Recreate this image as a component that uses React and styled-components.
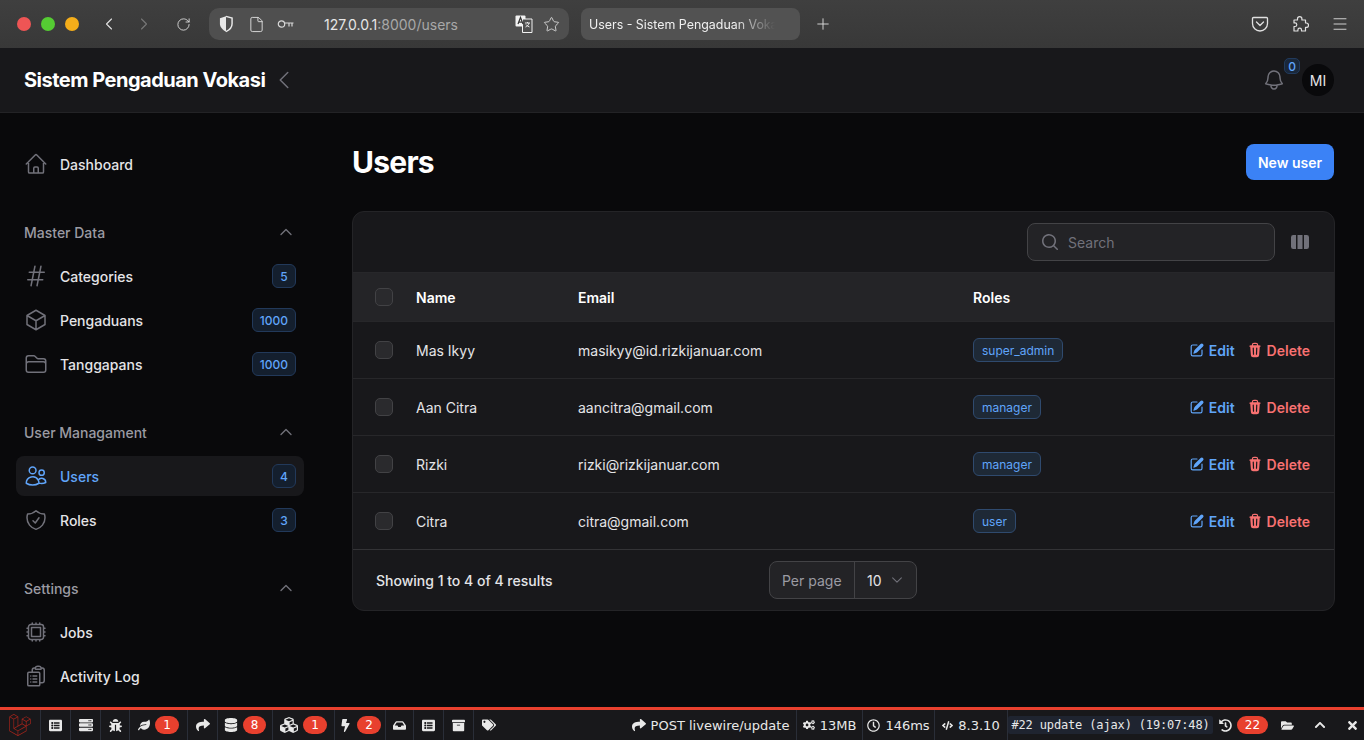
import React from 'react';
import styled, { createGlobalStyle } from 'styled-components';
import { ChevronLeft, ChevronRight, RotateCw, File, Star, Plus, Menu } from 'lucide-react';
import {
  FaLaravel, FaListAlt, FaServer, FaBug, FaLeaf, FaShare, FaDatabase, FaCubes, FaBolt, FaInbox,
  FaArchive, FaTags, FaCogs, FaRegClock, FaCode, FaHistory, FaFolderOpen, FaChevronUp, FaTimes,
} from 'react-icons/fa';

const GlobalStyle = createGlobalStyle`
  html, body {
    margin: 0;
    padding: 0;
    height: 100%;
    overflow: hidden;
    background: #09090b;
  }
  * { box-sizing: border-box; }
  body {
    font-family: Inter, "Liberation Sans", sans-serif;
    font-size: 14px;
    color: #e4e4e7;
  }
`;

const Page = styled.div`
  display: flex;
  flex-direction: column;
  height: 740px;
`;

/* browser chrome */
const Chrome = styled.div`
  height: 48px;
  flex: none;
  display: flex;
  align-items: center;
  background: linear-gradient(#3f3f3f, #383838);
  color: #e0e0e0;
`;

const Lights = styled.div`
  display: flex;
  gap: 10px;
  padding-left: 17px;
  width: 91px;
`;

const Light = styled.span`
  width: 14px;
  height: 14px;
  border-radius: 50%;
  background: ${(p) => p.$color};
`;

const NavIcon = styled.span`
  width: ${(p) => p.$w || 35}px;
  display: flex;
  justify-content: center;
  color: ${(p) => (p.$dim ? '#777' : '#e0e0e0')};
`;

const UrlBar = styled.div`
  margin-left: 3px;
  width: 360px;
  height: 32px;
  border-radius: 10px;
  background: #4f4f4f;
  display: flex;
  align-items: center;
  padding-left: 8px;
`;

const UrlText = styled.div`
  margin-left: 29px;
  flex: 1;
  font-size: 14px;
  color: #e6e6e6;
  span { color: #a8a8a8; }
`;

const Tab = styled.div`
  margin-left: 12px;
  width: 219px;
  height: 32px;
  border-radius: 8px;
  background: #525252;
  display: flex;
  align-items: center;
  padding-left: 8px;
  font-size: 12.4px;
  color: #f0f0f0;
  span {
    width: 186px;
    overflow: hidden;
    white-space: nowrap;
    -webkit-mask-image: linear-gradient(90deg, #000 78%, transparent);
    mask-image: linear-gradient(90deg, #000 78%, transparent);
  }
`;

const ChromeRight = styled.div`
  margin-left: auto;
  display: flex;
  align-items: center;
  padding-right: 4px;
`;

/* app top bar */
const TopBar = styled.header`
  height: 65px;
  flex: none;
  display: flex;
  align-items: center;
  padding: 0 30px 0 24px;
  background: #18181b;
  border-bottom: 1px solid #232326;
`;

const Brand = styled.div`
  font-size: 20px;
  font-weight: 700;
  letter-spacing: -0.5px;
  color: #fff;
  line-height: 28px;
`;

const Collapse = styled.span`
  display: flex;
  margin-left: 7px;
  color: #71717a;
`;

const TopRight = styled.div`
  margin-left: auto;
  display: flex;
  align-items: center;
  gap: 16px;
`;

const Bell = styled.div`
  position: relative;
  display: flex;
  color: #71717a;
`;

const BellCount = styled.span`
  position: absolute;
  top: -10px;
  left: 22px;
  width: 16px;
  height: 16px;
  border-radius: 5px;
  display: flex;
  align-items: center;
  justify-content: center;
  font-size: 12px;
  font-weight: 500;
  color: #60a5fa;
  background: #19273a;
  border: 1px solid #213a5c;
`;

const Avatar = styled.div`
  width: 32px;
  height: 32px;
  border-radius: 50%;
  background: #09090b;
  display: flex;
  align-items: center;
  justify-content: center;
  font-size: 14px;
  color: #e4e4e7;
`;

/* body */
const Body = styled.div`
  flex: 1;
  min-height: 0;
  display: flex;
`;

const Sidebar = styled.nav`
  width: 320px;
  flex: none;
  padding: 31px 16px 0;
  display: flex;
  flex-direction: column;
  gap: 28px;
`;

const Group = styled.div`
  display: flex;
  flex-direction: column;
  gap: 4px;
`;

const GroupLabel = styled.div`
  height: 40px;
  display: flex;
  align-items: center;
  justify-content: space-between;
  padding: 0 10px 0 8px;
  font-weight: 500;
  color: #9b9ba3;
  svg { color: #71717a; }
`;

const Item = styled.a`
  height: 40px;
  border-radius: 8px;
  display: flex;
  align-items: center;
  gap: 12px;
  padding: 0 8px;
  font-weight: 500;
  color: ${(p) => (p.$active ? '#60a5fa' : '#e4e4e7')};
  background: ${(p) => (p.$active ? '#18181b' : 'transparent')};
  svg { color: ${(p) => (p.$active ? '#60a5fa' : '#71717a')}; flex: none; }
  b {
    font-weight: 500;
    flex: 1;
  }
`;

const Pill = styled.span`
  min-width: 24px;
  height: 24px;
  padding: 0 7px;
  border-radius: 6px;
  display: inline-flex;
  align-items: center;
  justify-content: center;
  font-size: 12px;
  font-weight: 500;
  color: #60a5fa;
  background: #141f2e;
  border: 1px solid #22395a;
`;

const Main = styled.main`
  flex: 1;
  min-width: 0;
  padding: 31px 29px 0 32px;
`;

const Heading = styled.div`
  height: 36px;
  display: flex;
  align-items: center;
  justify-content: space-between;
  margin-bottom: 31px;
  h1 {
    margin: 0;
    font-size: 30px;
    font-weight: 700;
    letter-spacing: -0.75px;
    color: #fff;
  }
`;

const NewButton = styled.button`
  height: 36px;
  width: 88px;
  margin-right: 1px;
  border: 0;
  border-radius: 8px;
  background: #3b82f6;
  color: #fff;
  font-family: inherit;
  font-size: 14px;
  font-weight: 600;
`;

const Card = styled.section`
  height: 400px;
  border-radius: 12px;
  background: #18181b;
  border: 1px solid #242427;
  overflow: hidden;
`;

const Toolbar = styled.div`
  height: 60px;
  display: flex;
  align-items: center;
  justify-content: flex-end;
  gap: 15px;
  padding-right: 24px;
`;

const Search = styled.div`
  width: 248px;
  height: 38px;
  border-radius: 8px;
  background: #232326;
  border: 1px solid #434346;
  display: flex;
  align-items: center;
  gap: 8px;
  padding-left: 12px;
  color: #71717a;
  font-size: 14px;
`;

const ColumnsIcon = styled.span`
  display: flex;
  color: #71717a;
`;

const Row = styled.div`
  display: grid;
  grid-template-columns: 41px 162px 395px 1fr auto;
  align-items: center;
  height: ${(p) => (p.$head ? 49 : 57)}px;
  padding: 0 24px 0 22px;
  border-top: 1px solid #27272a;
  background: ${(p) => (p.$head ? '#242427' : 'transparent')};
  font-weight: ${(p) => (p.$head ? 600 : 400)};
  color: ${(p) => (p.$head ? '#fff' : '#e4e4e7')};
`;

const Check = styled.span`
  width: 18px;
  height: 18px;
  border-radius: 5px;
  background: #2a2a2d;
  border: 1px solid #424245;
`;

const Role = styled.span`
  display: inline-flex;
  align-items: center;
  height: 24px;
  padding: 0 8px;
  border-radius: 6px;
  font-size: 12px;
  font-weight: 400;
  color: #60a5fa;
  background: #1e2936;
  border: 1px solid #2f4a6e;
`;

const Actions = styled.div`
  display: flex;
  gap: 12px;
`;

const Action = styled.a`
  display: flex;
  align-items: center;
  gap: 4px;
  font-weight: 600;
  color: ${(p) => (p.$danger ? '#f87171' : '#60a5fa')};
`;

const Footer = styled.div`
  height: 61px;
  border-top: 1px solid #333336;
  display: grid;
  grid-template-columns: 1fr auto 1fr;
  align-items: center;
  padding: 0 24px 0 23px;
  font-weight: 500;
  color: #e4e4e7;
`;

const PerPage = styled.div`
  height: 38px;
  display: flex;
  align-items: center;
  border-radius: 8px;
  border: 1px solid #434346;
  background: #232326;
`;

const PerLabel = styled.span`
  width: 85px;
  height: 100%;
  display: flex;
  align-items: center;
  padding-left: 12px;
  color: #9b9ba3;
  font-weight: 400;
  border-right: 1px solid #434346;
`;

const PerValue = styled.span`
  width: 61px;
  display: flex;
  align-items: center;
  justify-content: space-between;
  padding: 0 12px;
  font-weight: 400;
  svg { color: #71717a; }
`;

/* debug bar */
const DebugBar = styled.div`
  height: 33px;
  flex: none;
  display: flex;
  border-top: 3px solid #e8402e;
  background: #18181b;
  color: #e8e8e8;
  font-family: "DejaVu Sans", sans-serif;
  font-size: 13px;
`;

const DebugLogo = styled.div`
  width: 41px;
  display: flex;
  align-items: center;
  justify-content: center;
  color: #a3241b;
  border-right: 1px solid #2a2e38;
`;

const DebugTab = styled.div`
  width: ${(p) => p.$w}px;
  display: flex;
  align-items: center;
  justify-content: center;
  gap: 5px;
  white-space: nowrap;
  border-right: ${(p) => (p.$plain ? 0 : '1px solid #2a2e38')};
`;

const DebugCount = styled.span`
  min-width: 23px;
  height: 18px;
  padding: 0 8px;
  border-radius: 9px;
  background: #e8402e;
  color: #fff;
  font-size: 12px;
  display: flex;
  align-items: center;
  justify-content: center;
`;

const DebugRight = styled.div`
  margin-left: auto;
  display: flex;
`;

const Dataset = styled.div`
  width: 205px;
  display: flex;
  align-items: center;
  justify-content: center;
  margin: 6px 0;
  border-radius: 2px;
  background: #1f2430;
  font-family: "DejaVu Sans Mono", monospace;
  font-size: 12px;
  letter-spacing: -0.15px;
`;

const Hero = ({ d, size = 24, sw = 1.5 }) => (
  <svg width={size} height={size} viewBox="0 0 24 24" fill="none" stroke="currentColor" strokeWidth={sw} strokeLinecap="round" strokeLinejoin="round">
    <path d={d} />
  </svg>
);

const Mini = ({ d, size = 16 }) => (
  <svg width={size} height={size} viewBox="0 0 20 20" fill="currentColor">
    {[].concat(d).map((p) => <path key={p} fillRule="evenodd" clipRule="evenodd" d={p} />)}
  </svg>
);

const paths = {
  home: 'm2.25 12 8.954-8.955c.44-.439 1.152-.439 1.591 0L21.75 12M4.5 9.75v10.125c0 .621.504 1.125 1.125 1.125H9.75v-4.875c0-.621.504-1.125 1.125-1.125h2.25c.621 0 1.125.504 1.125 1.125V21h4.125c.621 0 1.125-.504 1.125-1.125V9.75M8.25 21h8.25',
  hash: 'M5.25 8.25h15m-16.5 7.5h15m-1.8-13.5-3.9 19.5m-2.1-19.5-3.9 19.5',
  cube: 'm21 7.5-9-5.25L3 7.5m18 0-9 5.25m9-5.25v9l-9 5.25M3 7.5l9 5.25M3 7.5v9l9 5.25m0-9v9',
  folder: 'M2.25 12.75V12A2.25 2.25 0 0 1 4.5 9.75h15A2.25 2.25 0 0 1 21.75 12v.75m-8.69-6.44-2.12-2.12a1.5 1.5 0 0 0-1.061-.44H4.5A2.25 2.25 0 0 0 2.25 6v12a2.25 2.25 0 0 0 2.25 2.25h15A2.25 2.25 0 0 0 21.75 18V9a2.25 2.25 0 0 0-2.25-2.25h-5.379a1.5 1.5 0 0 1-1.06-.44Z',
  users: 'M15 19.128a9.38 9.38 0 0 0 2.625.372 9.337 9.337 0 0 0 4.121-.952 4.125 4.125 0 0 0-7.533-2.493M15 19.128v-.003c0-1.113-.285-2.16-.786-3.07M15 19.128v.106A12.318 12.318 0 0 1 8.624 21c-2.331 0-4.512-.645-6.374-1.766l-.001-.109a6.375 6.375 0 0 1 11.964-3.07M12 6.375a3.375 3.375 0 1 1-6.75 0 3.375 3.375 0 0 1 6.75 0Zm8.25 2.25a2.625 2.625 0 1 1-5.25 0 2.625 2.625 0 0 1 5.25 0Z',
  shield: 'M9 12.75 11.25 15 15 9.75m-3-7.036A11.959 11.959 0 0 1 3.598 6 11.99 11.99 0 0 0 3 9.749c0 5.592 3.824 10.29 9 11.623 5.176-1.332 9-6.03 9-11.622 0-1.31-.21-2.571-.598-3.751h-.152c-3.196 0-6.1-1.248-8.25-3.285Z',
  cpu: 'M8.25 3v1.5M4.5 8.25H3m18 0h-1.5M4.5 12H3m18 0h-1.5m-15 3.75H3m18 0h-1.5M8.25 19.5V21M12 3v1.5m0 15V21m3.75-18v1.5m0 15V21m-9-1.5h10.5a2.25 2.25 0 0 0 2.25-2.25V6.75a2.25 2.25 0 0 0-2.25-2.25H6.75A2.25 2.25 0 0 0 4.5 6.75v10.5a2.25 2.25 0 0 0 2.25 2.25Zm.75-12h9v9h-9v-9Z',
  log: 'M9 12h3.75M9 15h3.75M9 18h3.75m3 .75H18a2.25 2.25 0 0 0 2.25-2.25V6.108c0-1.135-.845-2.098-1.976-2.192a48.424 48.424 0 0 0-1.123-.08m-5.801 0c-.065.21-.1.433-.1.664 0 .414.336.75.75.75h4.5a.75.75 0 0 0 .75-.75 2.25 2.25 0 0 0-.1-.664m-5.8 0A2.251 2.251 0 0 1 13.5 2.25H15c1.012 0 1.867.668 2.15 1.586m-5.8 0c-.376.023-.75.05-1.124.08C9.095 4.01 8.25 4.973 8.25 6.108V8.25m0 0H4.875c-.621 0-1.125.504-1.125 1.125v11.25c0 .621.504 1.125 1.125 1.125h9.75c.621 0 1.125-.504 1.125-1.125V9.375c0-.621-.504-1.125-1.125-1.125H8.25ZM6.75 12h.008v.008H6.75V12Zm0 3h.008v.008H6.75V15Zm0 3h.008v.008H6.75V18Z',
  bell: 'M14.857 17.082a23.848 23.848 0 0 0 5.454-1.31A8.967 8.967 0 0 1 18 9.75V9A6 6 0 0 0 6 9v.75a8.967 8.967 0 0 1-2.312 6.022c1.733.64 3.56 1.085 5.455 1.31m5.714 0a24.255 24.255 0 0 1-5.714 0m5.714 0a3 3 0 1 1-5.714 0',
  left: 'M15.75 19.5 8.25 12l7.5-7.5',
  up: 'm4.5 15.75 7.5-7.5 7.5 7.5',
  search: 'M9 3.5a5.5 5.5 0 1 0 0 11 5.5 5.5 0 0 0 0-11ZM2 9a7 7 0 1 1 12.452 4.391l3.328 3.329a.75.75 0 1 1-1.06 1.06l-3.329-3.328A7 7 0 0 1 2 9Z',
  columns: 'M14 17h2.75A2.25 2.25 0 0 0 19 14.75v-9.5A2.25 2.25 0 0 0 16.75 3H14v14ZM12.5 3h-5v14h5V3ZM3.25 3H6v14H3.25A2.25 2.25 0 0 1 1 14.75v-9.5A2.25 2.25 0 0 1 3.25 3Z',
  edit: [
    'm5.433 13.917 1.262-3.155A4 4 0 0 1 7.58 9.42l6.92-6.918a2.121 2.121 0 0 1 3 3l-6.92 6.918c-.383.383-.84.685-1.343.886l-3.154 1.262a.5.5 0 0 1-.65-.65Z',
    'M3.5 5.75c0-.69.56-1.25 1.25-1.25H10A.75.75 0 0 0 10 3H4.75A2.75 2.75 0 0 0 2 5.75v9.5A2.75 2.75 0 0 0 4.75 18h9.5A2.75 2.75 0 0 0 17 15.25V10a.75.75 0 0 0-1.5 0v5.25c0 .69-.56 1.25-1.25 1.25h-9.5c-.69 0-1.25-.56-1.25-1.25v-9.5Z',
  ],
  trash: 'M8.75 1A2.75 2.75 0 0 0 6 3.75v.443c-.795.077-1.584.176-2.365.298a.75.75 0 1 0 .23 1.482l.149-.022.841 10.518A2.75 2.75 0 0 0 7.596 19h4.807a2.75 2.75 0 0 0 2.742-2.53l.841-10.52.149.023a.75.75 0 0 0 .23-1.482A41.03 41.03 0 0 0 14 4.193V3.75A2.75 2.75 0 0 0 11.25 1h-2.5ZM10 4c.84 0 1.673.025 2.5.075V3.75c0-.69-.56-1.25-1.25-1.25h-2.5c-.69 0-1.25.56-1.25 1.25v.325C8.327 4.025 9.16 4 10 4ZM8.58 7.72a.75.75 0 0 0-1.5.06l.3 7.5a.75.75 0 1 0 1.5-.06l-.3-7.5Zm4.34.06a.75.75 0 1 0-1.5-.06l-.3 7.5a.75.75 0 1 0 1.5.06l.3-7.5Z',
};

const ShieldHalf = () => (
  <svg width="18" height="18" viewBox="0 0 16 16">
    <path d="M8 1.2 2.6 2.8v5c0 3 2.4 5.600 5.400 7z" fill="#e8e8e8" />
    <path d="M8 1.2l5.400 1.600v5c0 3-2.400 5.600-5.400 7" fill="none" stroke="#e8e8e8" strokeWidth="1.300" />
  </svg>
);

const KeyIcon = () => (
  <svg width="18" height="12" viewBox="0 0 18 12" fill="none" stroke="#d8d8d8" strokeWidth="1.200">
    <circle cx="4.500" cy="6" r="3.200" />
    <path d="M7.700 5h8.800M12 5v3.500M15 5v3.500" />
  </svg>
);

const TranslateIcon = () => (
  <svg width="18" height="18" viewBox="0 0 18 18">
    <rect x="0.500" y="0.500" width="10" height="11" rx="1" fill="#f2f2f2" />
    <path d="M7.500 4h9.500v13.500H7.500z" fill="#4f4f4f" stroke="#f2f2f2" />
    <path d="M3 9l2.500-6.500L8 9M3.800 7.200h3.400" fill="none" stroke="#333" strokeWidth="1.200" />
    <path d="M10 8h5M12.500 7v1M14 8c-.5 2.500-2 3.500-3.500 4M11 9.500c.8 1.300 2 2 3.500 2.500" fill="none" stroke="#f2f2f2" strokeWidth="0.900" />
  </svg>
);

const PocketIcon = () => (
  <svg width="18" height="18" viewBox="0 0 18 18" fill="none" stroke="#e0e0e0" strokeWidth="1.300" strokeLinejoin="round" strokeLinecap="round">
    <path d="M2.500 2.500h13a1 1 0 0 1 1 1V8.500a7.500 7.500 0 0 1-15 0V3.500a1 1 0 0 1 1-1z" />
    <path d="M5.500 7 9 10.500 12.500 7" />
  </svg>
);

const ExtensionIcon = () => (
  <svg width="18" height="18" viewBox="0 0 18 18" fill="none" stroke="#e0e0e0" strokeWidth="1.200" strokeLinejoin="round">
    <path d="M6.500 5V3.800a2.200 2.200 0 0 1 4.400 0V5h3.600v3h.8a2.200 2.200 0 0 1 0 4.400h-.8V16h-4v-1a1.800 1.800 0 0 0-3.600 0v1H3v-4.500h1a1.800 1.800 0 0 0 0-3.600H3V5z" />
  </svg>
);

const users = [
  { name: 'Mas Ikyy', email: 'masikyy@id.rizkijanuar.com', role: 'super_admin' },
  { name: 'Aan Citra', email: 'aancitra@gmail.com', role: 'manager' },
  { name: 'Rizki', email: 'rizki@rizkijanuar.com', role: 'manager' },
  { name: 'Citra', email: 'citra@gmail.com', role: 'user' },
];

const groups = [
  {
    label: 'Master Data',
    items: [
      { icon: 'hash', text: 'Categories', count: 5 },
      { icon: 'cube', text: 'Pengaduans', count: 1000 },
      { icon: 'folder', text: 'Tanggapans', count: 1000 },
    ],
  },
  {
    label: 'User Managament',
    items: [
      { icon: 'users', text: 'Users', count: 4, active: true },
      { icon: 'shield', text: 'Roles', count: 3 },
    ],
  },
  {
    label: 'Settings',
    items: [
      { icon: 'cpu', text: 'Jobs' },
      { icon: 'log', text: 'Activity Log' },
    ],
  },
];

export default function App() {
  return (
    <Page>
      <GlobalStyle />
      <Chrome>
        <Lights>
          <Light $color="#ee5555" />
          <Light $color="#55cc33" />
          <Light $color="#f5ae1a" />
        </Lights>
        <NavIcon><ChevronLeft size={20} strokeWidth={1.3} /></NavIcon>
        <NavIcon $dim><ChevronRight size={20} strokeWidth={1.3} /></NavIcon>
        <NavIcon $w={45}><RotateCw size={15} strokeWidth={1.4} /></NavIcon>
        <UrlBar>
          <ShieldHalf />
          <NavIcon $w={42}><File size={17} strokeWidth={1.3} /></NavIcon>
          <KeyIcon />
          <UrlText>127.0.0.1<span>:8000/users</span></UrlText>
          <TranslateIcon />
          <NavIcon $w={36}><Star size={17} strokeWidth={1.2} /></NavIcon>
        </UrlBar>
        <Tab><span>Users - Sistem Pengaduan Vokasi</span></Tab>
        <NavIcon $w={46}><Plus size={18} strokeWidth={1.2} /></NavIcon>
        <ChromeRight>
          <NavIcon $w={40}><PocketIcon /></NavIcon>
          <NavIcon $w={40}><ExtensionIcon /></NavIcon>
          <NavIcon $w={40}><Menu size={18} strokeWidth={1.2} /></NavIcon>
        </ChromeRight>
      </Chrome>

      <TopBar>
        <Brand>Sistem Pengaduan Vokasi</Brand>
        <Collapse><Hero d={paths.left} /></Collapse>
        <TopRight>
          <Bell>
            <Hero d={paths.bell} />
            <BellCount>0</BellCount>
          </Bell>
          <Avatar>MI</Avatar>
        </TopRight>
      </TopBar>

      <Body>
        <Sidebar>
          <Item>
            <Hero d={paths.home} />
            <b>Dashboard</b>
          </Item>
          {groups.map((g) => (
            <Group key={g.label}>
              <GroupLabel>
                {g.label}
                <Hero d={paths.up} size={16} sw={2} />
              </GroupLabel>
              {g.items.map((it) => (
                <Item key={it.text} $active={it.active}>
                  <Hero d={paths[it.icon]} />
                  <b>{it.text}</b>
                  {it.count && <Pill>{it.count}</Pill>}
                </Item>
              ))}
            </Group>
          ))}
        </Sidebar>

        <Main>
          <Heading>
            <h1>Users</h1>
            <NewButton>New user</NewButton>
          </Heading>
          <Card>
            <Toolbar>
              <Search>
                <Mini d={paths.search} size={20} />
                Search
              </Search>
              <ColumnsIcon><Mini d={paths.columns} size={20} /></ColumnsIcon>
            </Toolbar>
            <Row $head>
              <Check />
              <span>Name</span>
              <span>Email</span>
              <span>Roles</span>
            </Row>
            {users.map((u) => (
              <Row key={u.email}>
                <Check />
                <span>{u.name}</span>
                <span>{u.email}</span>
                <div><Role>{u.role}</Role></div>
                <Actions>
                  <Action><Mini d={paths.edit} />Edit</Action>
                  <Action $danger><Mini d={paths.trash} />Delete</Action>
                </Actions>
              </Row>
            ))}
            <Footer>
              <span>Showing 1 to 4 of 4 results</span>
              <PerPage>
                <PerLabel>Per page</PerLabel>
                <PerValue>10 <Hero d="m19.500 8.250-7.500 7.500-7.500-7.500" size={14} sw={1.8} /></PerValue>
              </PerPage>
            </Footer>
          </Card>
        </Main>
      </Body>

      <DebugBar>
        <DebugLogo><FaLaravel size={22} /></DebugLogo>
        <DebugTab $w={30}><FaListAlt size={13} /></DebugTab>
        <DebugTab $w={30}><FaServer size={14} /></DebugTab>
        <DebugTab $w={29}><FaBug size={13} /></DebugTab>
        <DebugTab $w={58}><FaLeaf size={12} /><DebugCount>1</DebugCount></DebugTab>
        <DebugTab $w={30}><FaShare size={14} /></DebugTab>
        <DebugTab $w={55}><FaDatabase size={14} /><DebugCount>8</DebugCount></DebugTab>
        <DebugTab $w={62}><FaCubes size={18} /><DebugCount>1</DebugCount></DebugTab>
        <DebugTab $w={51}><FaBolt size={13} /><DebugCount>2</DebugCount></DebugTab>
        <DebugTab $w={28}><FaInbox size={13} /></DebugTab>
        <DebugTab $w={30}><FaListAlt size={13} /></DebugTab>
        <DebugTab $w={30}><FaArchive size={13} /></DebugTab>
        <DebugTab $w={30} $plain><FaTags size={14} /></DebugTab>
        <DebugRight>
          <DebugTab $w={172}><FaShare size={14} />POST livewire/update</DebugTab>
          <DebugTab $w={66}><FaCogs size={12} />13MB</DebugTab>
          <DebugTab $w={72}><FaRegClock size={13} />146ms</DebugTab>
          <DebugTab $w={73}><FaCode size={11} />8.3.10</DebugTab>
          <Dataset>#22 update (ajax) (19:07:48)</Dataset>
          <DebugTab $w={61} $plain><FaHistory size={13} /><DebugCount>22</DebugCount></DebugTab>
          <DebugTab $w={26} $plain><FaFolderOpen size={13} /></DebugTab>
          <DebugTab $w={40} $plain><FaChevronUp size={12} /></DebugTab>
          <DebugTab $w={24} $plain><FaTimes size={13} /></DebugTab>
        </DebugRight>
      </DebugBar>
    </Page>
  );
}
